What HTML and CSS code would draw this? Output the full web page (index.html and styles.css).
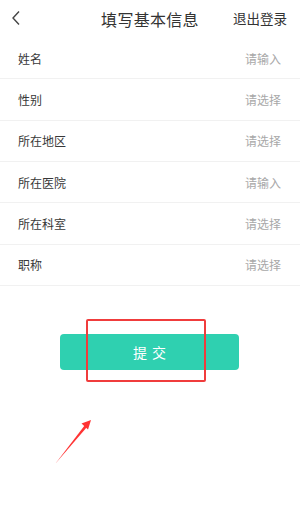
FILE: index.html
```html
<!DOCTYPE html>
<html lang="zh">
<head>
<meta charset="utf-8">
<link rel="stylesheet" href="styles.css">
</head>
<body>
<div class="page">
  <header class="nav">
    <svg class="back" width="10" height="16" viewBox="0 0 10 16"><path d="M8 1.5 L2 8 L8 14.5" fill="none" stroke="#444" stroke-width="1.4"/></svg>
    <div class="title">填写基本信息</div>
    <div class="logout">退出登录</div>
  </header>
  <ul class="form">
    <li class="row"><span class="label">姓名</span><span class="ph">请输入</span></li>
    <li class="row"><span class="label">性别</span><span class="ph">请选择</span></li>
    <li class="row"><span class="label">所在地区</span><span class="ph">请选择</span></li>
    <li class="row"><span class="label">所在医院</span><span class="ph">请输入</span></li>
    <li class="row"><span class="label">所在科室</span><span class="ph">请选择</span></li>
    <li class="row"><span class="label">职称</span><span class="ph">请选择</span></li>
  </ul>
  <div class="actions">
    <button class="submit">提 交</button>
    <div class="highlight"></div>
  </div>
  <svg class="arrow" width="300" height="516" viewBox="0 0 300 516">
    <polygon points="55.5,463.5 85,425 87,427" fill="#f33"/>
    <polygon points="91,420 81.5,423.5 88,429.5" fill="#f33"/>
  </svg>
</div>
</body>
</html>
```

FILE: styles.css
```css
* { box-sizing: border-box; margin: 0; padding: 0; }
html, body { width: 300px; height: 516px; background: #fff; overflow: hidden; }
body { font-family: "Noto Sans CJK SC", "Noto Sans", sans-serif; color: #333; }
.page { position: relative; width: 300px; height: 516px; }
.nav { position: relative; height: 38px; display: flex; align-items: center; justify-content: center; }
.back { position: absolute; left: 11px; top: 10px; }
.title { font-size: 16px; color: #333; letter-spacing: 0.3px; }
.logout { position: absolute; right: 13px; top: 8px; font-size: 13.5px; color: #333; }
.form { list-style: none; }
.row { height: 41.33px; display: flex; align-items: center; justify-content: space-between; padding: 0 19px 0 18px; border-bottom: 1px solid #f1f1f1; }
.label { font-size: 12px; color: #383838; }
.ph { font-size: 12px; color: #a8a8a8; }
.actions { position: relative; display: flex; justify-content: center; padding-top: 48px; }
.submit { width: 179px; height: 36px; border: none; border-radius: 4px; background: #2fd0b0; color: #fff; font-family: inherit; font-size: 14px; letter-spacing: 1px; text-indent: 1px; margin-left: -1px; }
.highlight { position: absolute; left: 86px; top: 33px; width: 120px; height: 63px; border: 2px solid #f03c3c; border-radius: 2px; }
.arrow { position: absolute; left: 0; top: 0; pointer-events: none; }
```
